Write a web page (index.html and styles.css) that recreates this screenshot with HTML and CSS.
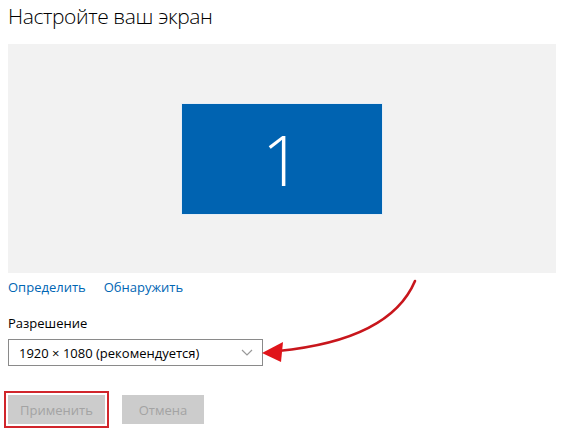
FILE: index.html
```html
<!DOCTYPE html>
<html lang="ru">
<head>
    <meta charset="UTF-8">
    <meta name="viewport" content="width=device-width, initial-scale=1.0">
    <title>Настройте ваш экран</title>
    <link rel="stylesheet" href="styles.css">
</head>
<body>
    <h1>Настройте ваш экран</h1>

    <div class="display-panel">
        <div class="monitor">1</div>
    </div>

    <div class="links">
        <a href="#">Определить</a>
        <a href="#">Обнаружить</a>
    </div>

    <div class="form-group">
        <label for="resolution">Разрешение</label>
        <div class="select" id="resolution">
            <span>1920 × 1080 (рекомендуется)</span>
            <svg class="chevron" width="12" height="7" viewBox="0 0 12 7">
                <path d="M1 1 L6 6 L11 1" fill="none" stroke="#999" stroke-width="1.2"/>
            </svg>
        </div>
    </div>

    <div class="buttons">
        <span class="highlight"><button disabled>Применить</button></span>
        <button disabled>Отмена</button>
    </div>

    <!-- annotation arrow -->
    <svg class="arrow" width="570" height="437" viewBox="0 0 570 437">
        <path d="M415 281 Q390 340 278 351" fill="none" stroke="#c8161c" stroke-width="2.6" stroke-linecap="round"/>
        <polygon points="262,353 283,342 281,362" fill="#e0141a"/>
    </svg>
</body>
</html>
```

FILE: styles.css
```css
body {
    font-family: "Open Sans", "Noto Sans", sans-serif;
    margin: 0;
    padding: 0 8px;
    background: #fff;
    color: #000;
    position: relative;
    width: 548px;
}
h1 {
    font-size: 21px;
    font-weight: 300;
    letter-spacing: -0.4px;
    margin: 0;
    padding-top: 1px;
    height: 43px;
    line-height: 30px;
}
.display-panel {
    background: #f2f2f2;
    height: 229px;
    display: flex;
    align-items: center;
    justify-content: center;
}
.monitor {
    width: 200px;
    height: 110px;
    background: #0063b1;
    color: #fff;
    font-size: 70px;
    font-weight: 300;
    display: flex;
    align-items: center;
    justify-content: center;
    line-height: 1;
    box-shadow: 0 0 0 1px #e6eef6;
}
.links {
    display: flex;
    gap: 18px;
    margin-top: 4px;
    height: 30px;
    line-height: 20px;
}
.links a {
    color: #0066b4;
    text-decoration: none;
    font-size: 13px;
}
.form-group {
    margin-top: 7px;
}
label {
    display: block;
    font-size: 13px;
    line-height: 18px;
    margin-bottom: 7px;
}
.select {
    width: 255px;
    height: 27px;
    box-sizing: border-box;
    border: 1px solid #8a8a8a;
    display: flex;
    align-items: center;
    justify-content: space-between;
    padding: 0 9px 0 10px;
    font-size: 13px;
}
.buttons {
    display: flex;
    align-items: center;
    gap: 13px;
    margin-top: 25px;
    margin-left: -4px;
}
.highlight {
    display: inline-block;
    border: 2px solid #d1252b;
    padding: 2px 2px;
}
button {
    background: #cccccc;
    color: #a3a3a3;
    border: none;
    font-family: inherit;
    font-size: 13px;
    height: 29px;
    width: 97px;
    padding: 0;
    display: block;
}
.buttons > button {
    width: 82px;
}
.arrow {
    position: absolute;
    left: 0;
    top: 0;
    pointer-events: none;
}
```
